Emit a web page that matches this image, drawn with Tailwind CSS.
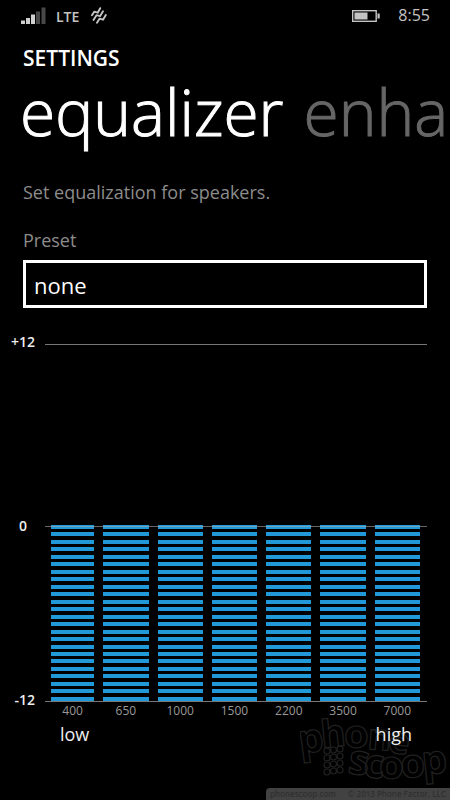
<!DOCTYPE html>
<html lang="en">
<head>
<meta charset="utf-8">
<meta name="viewport" content="width=device-width, initial-scale=1">
<title>Equalizer</title>
<script src="https://cdn.jsdelivr.net/npm/@tailwindcss/browser@4"></script>
</head>
<body class="bg-black text-white font-['Open_Sans','Noto_Sans',sans-serif] overflow-x-hidden">
<div class="relative min-h-screen overflow-hidden flex flex-col">

  <header class="flex items-center h-8 px-5 text-[#c4c4c4]">
    <svg class="w-[26px] h-[18px]" viewBox="0 0 26 18" aria-label="Signal">
      <path fill="#d0d0d0" d="M1 13.500h4V17H1zM6 11h4v6H6zM11 7.500h4V17h-4z"/>
      <path fill="#484848" d="M16 4.500h4V17h-4zM21.500 0.500h4V17h-4z"/>
    </svg>
    <span class="ml-[10px] pt-0.5 text-sm leading-5 font-semibold">LTE</span>
    <svg class="ml-3 w-4 h-[18px]" viewBox="0 0 16 18" fill="none" stroke="#c4c4c4" stroke-width="1.900" stroke-linecap="round" stroke-linejoin="round" aria-label="Vibrate">
      <path d="M1 8.200L3.200 4.700 6.700 5.700 9.200 1.200"/>
      <path d="M2.500 13L5.500 8.200 9 9.200 12 4.200"/>
      <path d="M6 15.700L8.500 11.700 12 12.700 14.800 8"/>
    </svg>
    <svg class="ml-auto w-7 h-3" viewBox="0 0 28 12" aria-label="Battery">
      <rect x="0.700" y="0.700" width="23.500" height="10.600" fill="none" stroke="#c4c4c4" stroke-width="1.400"/>
      <rect x="2.500" y="2.500" width="13" height="7" fill="#c4c4c4"/>
      <rect x="25.500" y="3.500" width="2.200" height="5" fill="#c4c4c4"/>
    </svg>
    <time class="ml-[18px] pb-0.5 text-base leading-6">8:55</time>
  </header>

  <main class="px-[23px] pt-3">
    <p class="text-[21px] leading-7 font-semibold">SETTINGS</p>
    <nav class="flex gap-5 -ml-[3px] -mr-[23px] whitespace-nowrap text-[64px] leading-[80px] font-light [-webkit-text-stroke:1px_currentColor]" aria-label="Sections">
      <button type="button" aria-current="page">equalizer</button>
      <button type="button" class="text-[#666]">enha</button>
    </nav>
    <p class="mt-7 text-lg leading-6 text-[#8c8c8c]">Set equalization for speakers.</p>
    <label for="preset" class="block mt-6 text-lg leading-6 text-[#8c8c8c]">Preset</label>
    <select id="preset" class="block mt-2 w-full h-12 appearance-none rounded-none border-3 border-white bg-black px-2 pt-0.5 text-[22px] leading-8 text-white">
      <option>none</option>
    </select>
  </main>

  <section class="grid grid-cols-[45px_1fr] pr-[23px] mt-[27px]" aria-label="Equalizer bands">
    <div class="grid grid-rows-[184px_174px_20px] content-start -mt-[3px] text-sm leading-5 font-semibold text-[#eee] pr-[10px] text-right">
      <span>+12</span><span class="pr-2">0</span><span>-12</span>
    </div>
    <div>
      <div class="relative flex flex-col justify-end h-[358px] mt-[9px] border-y border-[#777]">
        <div id="bands" class="grid grid-cols-[43fr_repeat(6,45fr)] gap-[9px] h-[176px] pl-[6px] pr-[7px]"></div>
        <div class="absolute inset-x-0 top-1/2 mt-[3px] h-px bg-[#aaa]/60 pointer-events-none"></div>
      </div>
      <div id="freqs" class="grid grid-cols-[43fr_repeat(6,45fr)] gap-[9px] pl-[6px] pr-[7px] pt-px text-center text-xs leading-4 text-[#999]"></div>
      <div class="relative z-10 flex justify-between px-[15px] mt-[3px] text-lg leading-6 text-[#eee]"><span>low</span><span>high</span></div>
    </div>
  </section>

  <svg class="absolute right-0 bottom-3 w-[150px] h-[76px] pointer-events-none" viewBox="0 0 150 76" fill="none" stroke="#202020" stroke-width="1.200" font-family="Open Sans, sans-serif" font-weight="700" font-size="40" aria-hidden="true">
    <text transform="translate(0 42) rotate(-8)">p</text>
    <text transform="translate(22 36) rotate(-6)" font-size="38">h</text>
    <text transform="translate(44 36)">o</text>
    <text transform="translate(67 37) rotate(4)" font-size="36">n</text>
    <text transform="translate(87 40) rotate(8)" font-size="36">e</text>
    <text transform="translate(47 61) rotate(8)" font-size="42">s</text>
    <text transform="translate(63 65) rotate(4)">c</text>
    <text transform="translate(79 67)">o</text>
    <text transform="translate(101 66) rotate(-3)">o</text>
    <text transform="translate(123 63) rotate(-6)">p</text>
    <g>
      <circle cx="27" cy="39" r="3"/><circle cx="33.500" cy="38" r="3"/><circle cx="40" cy="37" r="3"/>
      <circle cx="27" cy="46" r="3"/><circle cx="33.500" cy="45" r="3"/><circle cx="40" cy="44" r="3"/>
      <circle cx="27" cy="53" r="3"/><circle cx="33.500" cy="52" r="3"/><circle cx="40" cy="51" r="3"/>
      <circle cx="27" cy="60" r="3"/><circle cx="33.500" cy="59" r="3"/><circle cx="40" cy="58" r="3"/>
    </g>
  </svg>
  <footer class="absolute right-0 bottom-0 w-[184px] h-3 rounded-tl bg-[#424242] px-1 flex justify-between text-[8px] leading-3 font-semibold text-[#303030] whitespace-nowrap">
    <span>phonescoop.com</span><span>© 2013 Phone Factor, LLC</span>
  </footer>
</div>
<script>
  const bands = document.getElementById('bands'), freqs = document.getElementById('freqs');
  for (const hz of [400, 650, 1000, 1500, 2200, 3500, 7000]) {
    bands.insertAdjacentHTML('beforeend',
      `<div class="relative flex flex-col justify-between">${'<span class="h-1 bg-[#2199d8]"></span>'.repeat(24)}
       <input id="b${hz}" type="range" min="-12" max="12" value="0" class="absolute inset-0 w-full h-full opacity-0 [writing-mode:vertical-lr]"></div>`);
    freqs.insertAdjacentHTML('beforeend', `<label for="b${hz}">${hz}</label>`);
  }
</script>
</body>
</html>
